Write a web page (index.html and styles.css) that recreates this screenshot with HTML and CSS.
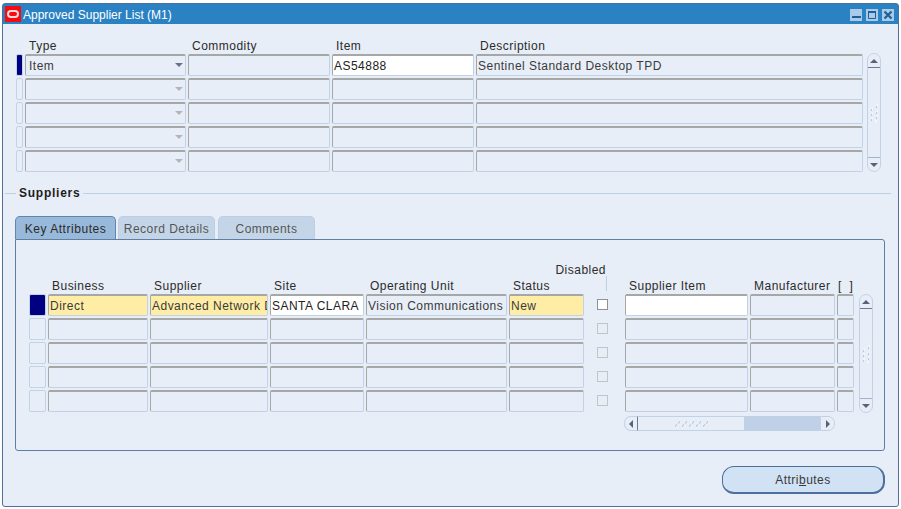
FILE: index.html
```html
<!DOCTYPE html>
<html lang="en">
<head>
<meta charset="utf-8">
<title>Approved Supplier List (M1)</title>
<link rel="stylesheet" href="styles.css">
</head>
<body>
<div class="window">
  <div class="titlebar">
    <span class="logo"><span class="logo-o"></span></span>
    <span class="title">Approved Supplier List (M1)</span>
    <span class="winbtns">
      <svg class="winbtn" viewBox="0 0 12 12"><rect width="12" height="12" fill="#a9cbe8"/><rect x="2" y="7" width="9" height="2" fill="#1f5f96"/></svg>
      <svg class="winbtn" viewBox="0 0 12 12"><rect width="12" height="12" fill="#a9cbe8"/><path d="M2.5 2.5h7v7h-7z" fill="none" stroke="#1f5f96" stroke-width="1"/><rect x="2" y="2" width="8" height="2" fill="#1f5f96"/></svg>
      <svg class="winbtn" viewBox="0 0 12 12"><rect width="12" height="12" fill="#a9cbe8"/><path d="M2.5 2.5l7 7M9.5 2.5l-7 7" stroke="#1f5f96" stroke-width="2.2"/></svg>
    </span>
  </div>
  <div class="content">
    <div class="top-grid">
      <span></span><span class="lbl">Type</span><span class="lbl">Commodity</span><span class="lbl">Item</span><span class="lbl">Description</span><span></span>

      <span class="ind ind-on"></span><div class="fld sel">Item<i class="caret"></i></div><div class="fld"></div><div class="fld white">AS54888</div><div class="fld">Sentinel Standard Desktop TPD</div>
      <div class="vscroll top-scroll">
        <span class="arrow up"></span>
        <span class="grip"><svg viewBox="0 0 10 20" width="10" height="20"><path d="M2 6h1M3 5h1M7 3h1M8 2h1M2 11h1M3 10h1M7 9h1M8 8h1M2 16h1M3 15h1M7 14h1M8 13h1M6 18h2" stroke="#fff" stroke-width="1"/><path d="M2 7h1M7 4h1M2 12h1M7 10h1M2 17h1M7 15h1" stroke="#8b9bb2" stroke-width="1"/></svg></span>
        <span class="arrow down"></span>
      </div>

      <span class="ind"></span><div class="fld sel"><i class="caret dim"></i></div><div class="fld"></div><div class="fld"></div><div class="fld"></div>
      <span class="ind"></span><div class="fld sel"><i class="caret dim"></i></div><div class="fld"></div><div class="fld"></div><div class="fld"></div>
      <span class="ind"></span><div class="fld sel"><i class="caret dim"></i></div><div class="fld"></div><div class="fld"></div><div class="fld"></div>
      <span class="ind"></span><div class="fld sel"><i class="caret dim"></i></div><div class="fld"></div><div class="fld"></div><div class="fld"></div>
    </div>

    <div class="section"><span class="rule rule-s"></span><span class="section-name">Suppliers</span><span class="rule"></span></div>

    <div class="tabs">
      <span class="tab tab-on">Key Attributes</span>
      <span class="tab tab-2">Record Details</span>
      <span class="tab tab-3">Comments</span>
    </div>
    <div class="panel">
      <div class="bot-grid">
        <span class="lbl disabled">Disabled</span>

        <span></span><span class="lbl">Business</span><span class="lbl">Supplier</span><span class="lbl">Site</span><span class="lbl">Operating Unit</span><span class="lbl">Status</span><span class="lbl"><i class="vline"></i></span><span class="lbl">Supplier Item</span><span class="lbl">Manufacturer</span><span class="lbl brackets">[ &nbsp;]</span><span></span>

        <span class="rowind rowind-on"></span><div class="fld yellow">Direct</div><div class="fld yellow clip">Advanced Network Devices</div><div class="fld white clip">SANTA CLARA</div><div class="fld clip">Vision Communications</div><div class="fld yellow">New</div><div class="chk-cell"><i class="chk chk-on"></i></div><div class="fld white"></div><div class="fld"></div><div class="fld"></div>
        <div class="vscroll bot-scroll">
          <span class="arrow up"></span>
          <span class="grip"><svg viewBox="0 0 10 20" width="10" height="20"><path d="M2 6h1M3 5h1M7 3h1M8 2h1M2 11h1M3 10h1M7 9h1M8 8h1M2 16h1M3 15h1M7 14h1M8 13h1M6 18h2" stroke="#fff" stroke-width="1"/><path d="M2 7h1M7 4h1M2 12h1M7 10h1M2 17h1M7 15h1" stroke="#8b9bb2" stroke-width="1"/></svg></span>
          <span class="arrow down"></span>
        </div>

        <span class="rowind"></span><div class="fld"></div><div class="fld"></div><div class="fld"></div><div class="fld"></div><div class="fld"></div><div class="chk-cell"><i class="chk"></i></div><div class="fld"></div><div class="fld"></div><div class="fld"></div>
        <span class="rowind"></span><div class="fld"></div><div class="fld"></div><div class="fld"></div><div class="fld"></div><div class="fld"></div><div class="chk-cell"><i class="chk"></i></div><div class="fld"></div><div class="fld"></div><div class="fld"></div>
        <span class="rowind"></span><div class="fld"></div><div class="fld"></div><div class="fld"></div><div class="fld"></div><div class="fld"></div><div class="chk-cell"><i class="chk"></i></div><div class="fld"></div><div class="fld"></div><div class="fld"></div>
        <span class="rowind"></span><div class="fld"></div><div class="fld"></div><div class="fld"></div><div class="fld"></div><div class="fld"></div><div class="chk-cell"><i class="chk"></i></div><div class="fld"></div><div class="fld"></div><div class="fld"></div>

        <div class="hscroll">
          <span class="h-arrow"><i class="tri-left"></i></span>
          <span class="h-thumb"><svg viewBox="0 0 36 8" width="36" height="8"><path d="M2 6h1M3 5h1M9 6h1M10 5h1M16 6h1M17 5h1M23 6h1M24 5h1M30 6h1M31 5h1M5 3h1M6 2h1M12 3h1M13 2h1M19 3h1M20 2h1M26 3h1M27 2h1M33 3h1M34 2h1" stroke="#a5b2c6" stroke-width="1"/></svg></span>
          <span class="h-track"></span>
          <span class="h-arrow h-arrow-r"><i class="tri-right"></i></span>
        </div>
      </div>
    </div>
    <div class="actions">
      <button class="btn" type="button">Attri<u>b</u>utes</button>
    </div>
  </div>
</div>
</body>
</html>
```

FILE: styles.css
```css
* { box-sizing: border-box; }
html, body { margin: 0; padding: 0; background: #fff; }
body {
  width: 901px;
  height: 509px;
  padding: 3px 2px 2px 2px;
  font-family: "Liberation Sans", Arial, sans-serif;
  font-size: 12px;
  letter-spacing: 0.48px;
  color: #333;
  overflow: hidden;
}
.window {
  width: 897px;
  height: 504px;
  border: 1px solid #4d6f9c;
  border-radius: 3px;
  background: #e8eef7;
  display: flex;
  flex-direction: column;
}
.titlebar {
  height: 20px;
  background: #2b82c3;
  color: #fff;
  display: flex;
  align-items: center;
  padding-left: 2px;
  flex: none;
}
.logo {
  width: 16px;
  height: 16px;
  background: #f70a10;
  display: flex;
  align-items: center;
  justify-content: center;
}
.logo-o {
  width: 12px;
  height: 8px;
  border: 2px solid #ffd8d8;
  border-radius: 4px;
}
.title { margin: 1px 0 0 2px; letter-spacing: 0; }
.winbtns { margin-left: auto; display: flex; gap: 4px; padding-right: 4px; margin-top: 2px; }
.winbtn { width: 12px; height: 12px; display: block; }

.content { flex: 1; display: flex; flex-direction: column; min-height: 0; }

.top-grid {
  display: grid;
  grid-template-columns: 7px 161px 142px 142px 387px 16px;
  grid-template-rows: 13px repeat(5, 22px);
  gap: 2px;
  margin: 15px 0 0 13px;
}
.lbl {
  display: block;
  height: 13px;
  line-height: 15px;
  padding-left: 4px;
  color: #2b2b2b;
  white-space: nowrap;
}
.ind {
  width: 7px;
  border: 1px solid #c3d3e6;
  border-radius: 2px;
  background: #e8eef7;
}
.ind-on { background: #000080; }
.fld {
  height: 22px;
  line-height: 20px;
  padding: 0 1px;
  border-style: solid;
  border-width: 2px 1px 1px 1px;
  border-color: #a6a8a8 #c2d2e6 #c2d2e6 #a6a8a8;
  border-radius: 2px;
  background: #e8eef7;
  color: #3a3a3a;
  white-space: nowrap;
  overflow: hidden;
  position: relative;
}
.white { background: #fff; color: #222; }
.yellow { background: #ffeda6; color: #3a3a3a; }
.clip { text-overflow: clip; }
.sel { padding-left: 3px; }
.caret {
  position: absolute;
  right: 2px;
  top: 7px;
  border-left: 4px solid transparent;
  border-right: 4px solid transparent;
  border-top: 4px solid #6b7187;
}
.caret.dim { border-top-color: #b4b6ba; }

.vscroll {
  display: flex;
  flex-direction: column;
  align-items: stretch;
  width: 14px;
  border: 1px solid #c2d2e6;
  border-radius: 7px;
  margin-left: 2px;
  background: #e8eef7;
}
.top-scroll { grid-column: 6; grid-row: 2 / span 5; margin-top: -1px; height: 119px; }
.arrow {
  height: 14px;
  flex: none;
  position: relative;
}
.arrow.up { border-bottom: 1px solid #6e7a93; }
.arrow.down { border-top: 1px solid #9fb3cf; }
.arrow::after {
  content: "";
  position: absolute;
  left: 2px;
  border-left: 4px solid transparent;
  border-right: 4px solid transparent;
}
.arrow.up::after { top: 5px; border-bottom: 4px solid #5a6178; }
.arrow.down::after { top: 5px; border-top: 4px solid #5a6178; }
.grip { flex: 1; display: flex; align-items: center; justify-content: center; }

.section {
  display: flex;
  align-items: center;
  margin: 14px 7px 0 2px;
  height: 14px;
}
.rule { flex: 1; height: 1px; background: #bccfe4; }
.rule-s { flex: none; width: 11px; }
.section-name { font-weight: bold; color: #1d1d1d; padding: 0 3px; letter-spacing: 0.75px; }

.tabs { display: flex; margin: 16px 0 0 12px; height: 23px; }
.tab {
  height: 23px;
  line-height: 25px;
  text-align: center;
  border-radius: 5px 5px 0 0;
  background: #c5d5e8;
  color: #555;
  border: 1px solid #bdcee3;
  border-bottom: 0;
}
.tab-on { width: 101px; background: #98b9da; color: #2b2b2b; border-color: #5f86ad; margin-right: 2px; letter-spacing: 0.55px; }
.tab-2 { width: 97px; margin-right: 3px; }
.tab-3 { width: 97px; }

.panel {
  margin-left: 12px;
  width: 870px;
  height: 212px;
  border: 1px solid #5f7ea4;
  border-radius: 0 3px 3px 3px;
  padding: 24px 0 0 13px;
  flex: none;
}
.bot-grid {
  display: grid;
  grid-template-columns: 17px 100px 118px 94px 141px 75px 37px 123px 85px 17px 17px;
  grid-template-rows: 13px 13px repeat(5, 22px) 17px;
  gap: 2px;
}
.disabled { grid-column: 1 / -1; text-align: right; margin-right: 267px; line-height: 13px; }
.vline {
  display: block;
  width: 21px;
  height: 15px;
  margin: -3px 0 0 -4px;
  border-right: 1px solid #bccfe4;
}
.brackets { padding-left: 1px; }
.rowind {
  width: 17px;
  height: 22px;
  border: 1px solid #c3d3e6;
  border-radius: 2px;
  background: #e8eef7;
}
.rowind-on { background: #000080; }
.chk-cell { display: flex; align-items: center; padding: 0 0 2px 11px; }
.chk {
  display: block;
  width: 11px;
  height: 11px;
  border: 1px solid #c2c4c6;
  background: #e8eef7;
}
.chk-on { background: #fff; border-color: #8f9296; }
.bot-scroll { grid-column: 11; grid-row: 3 / span 5; height: 119px; margin-left: 3px; }

.hscroll {
  grid-column: 8 / span 2;
  grid-row: 8;
  display: flex;
  height: 15px;
  margin: 2px 0 0 -1px;
}
.h-arrow {
  width: 14px;
  flex: none;
  border: 1px solid #c2d2e6;
  border-right: 1px solid #6e7a93;
  border-radius: 7px 0 0 7px;
  display: flex;
  align-items: center;
  justify-content: center;
  background: #e8eef7;
}
.h-arrow-r {
  width: 15px;
  border-radius: 0 7px 7px 0;
  border-right: 1px solid #c2d2e6;
  border-left: 1px solid #c2d2e6;
}
.tri-left { border-top: 4px solid transparent; border-bottom: 4px solid transparent; border-right: 4px solid #5a6178; }
.tri-right { border-top: 4px solid transparent; border-bottom: 4px solid transparent; border-left: 4px solid #5a6178; }
.h-thumb {
  width: 107px;
  flex: none;
  background: #e8eef7;
  border-top: 1px solid #c2d2e6;
  border-bottom: 1px solid #c2d2e6;
  border-right: 1px solid #c2d2e6;
  display: flex;
  align-items: center;
  justify-content: center;
}
.h-track { flex: 1; background: #c0d1e7; }

.actions { display: flex; justify-content: flex-end; padding: 15px 13px 0 0; }
.btn {
  width: 163px;
  height: 28px;
  padding: 0;
  border: 1px solid #4d6f9c;
  border-width: 1px 2px 2px 1px;
  border-radius: 12px;
  background: #d0e2f4;
  color: #3a3a3a;
  font: inherit;
  letter-spacing: inherit;
}
```
